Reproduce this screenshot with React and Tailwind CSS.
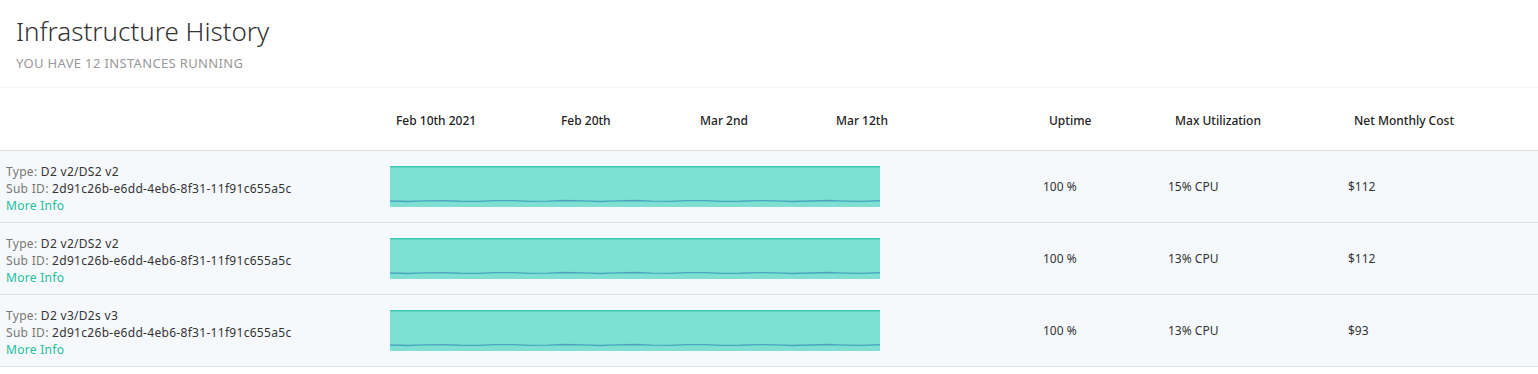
import React from 'react';

const rows = [
  { type: 'D2 v2/DS2 v2', id: '2d91c26b-e6dd-4eb6-8f31-11f91c655a5c', uptime: '100 %', util: '15% CPU', cost: '$112' },
  { type: 'D2 v2/DS2 v2', id: '2d91c26b-e6dd-4eb6-8f31-11f91c655a5c', uptime: '100 %', util: '13% CPU', cost: '$112' },
  { type: 'D2 v3/D2s v3', id: '2d91c26b-e6dd-4eb6-8f31-11f91c655a5c', uptime: '100 %', util: '13% CPU', cost: '$93' },
];

function Spark() {
  // small wobble along the bottom line
  const pts = [];
  for (let i = 0; i <= 28; i++) {
    const x = (i / 28) * 490;
    const y = 35 + Math.sin(i * 1.7) * 0.5;
    pts.push(`${x.toFixed(1)},${y.toFixed(2)}`);
  }
  return (
    <svg width="490" height="41" viewBox="0 0 490 41" className="block">
      <rect x="0" y="0" width="490" height="41" fill="#7ce0d3" />
      <rect x="0" y="0" width="490" height="1.5" fill="#3ccab2" />
      <polyline points={pts.join(' ')} fill="none" stroke="#4aa6bf" strokeWidth="1.3" />
    </svg>
  );
}

export default function App() {
  return (
    <div className="w-[1538px] h-[374px] bg-white text-[#333] overflow-hidden" style={{ fontFamily: '"Noto Sans", sans-serif' }}>
      {/* Title */}
      <div className="h-[88px] px-4 pt-[14px] border-b border-[#f3f3f3]">
        <h1 className="text-[26px] font-light leading-[34px] text-[#333]">Infrastructure History</h1>
        <p className="mt-[6px] text-[13px] leading-[18px] uppercase tracking-[0.35px] text-[#999]">You have 12 instances running</p>
      </div>

      {/* Header */}
      <div className="grid grid-cols-[390px_490px_163px_125px_180px_1fr] h-[63px] pt-[3px] items-center border-b border-[#dde1e6] text-[12px] font-medium text-[#222] whitespace-nowrap">
        <div />
        <div className="flex pl-[6px]">
          <span className="w-[165px] shrink-0">Feb 10th 2021</span>
          <span className="w-[139px] shrink-0">Feb 20th</span>
          <span className="w-[136px] shrink-0">Mar 2nd</span>
          <span className="shrink-0">Mar 12th</span>
        </div>
        <div />
        <div className="pl-[6px]">Uptime</div>
        <div className="pl-[7px]">Max Utilization</div>
        <div className="pl-[6px]">Net Monthly Cost</div>
      </div>

      {/* Rows */}
      {rows.map((r, i) => (
        <div key={i} className="grid grid-cols-[390px_490px_163px_125px_180px_1fr] h-[72px] items-center bg-[#f6f9fc] border-b border-[#dde1e6] text-[12px] text-[#333]">
          <div className="pl-[6px] pt-[3px] leading-[17px] tracking-[0.3px]">
            <div><span className="text-[#777]">Type: </span>{r.type}</div>
            <div><span className="text-[#777]">Sub ID: </span>{r.id}</div>
            <div className="text-[#22bf9f]">More Info</div>
          </div>
          <div><Spark /></div>
          <div />
          <div>{r.uptime}</div>
          <div>{r.util}</div>
          <div>{r.cost}</div>
        </div>
      ))}
    </div>
  );
}
